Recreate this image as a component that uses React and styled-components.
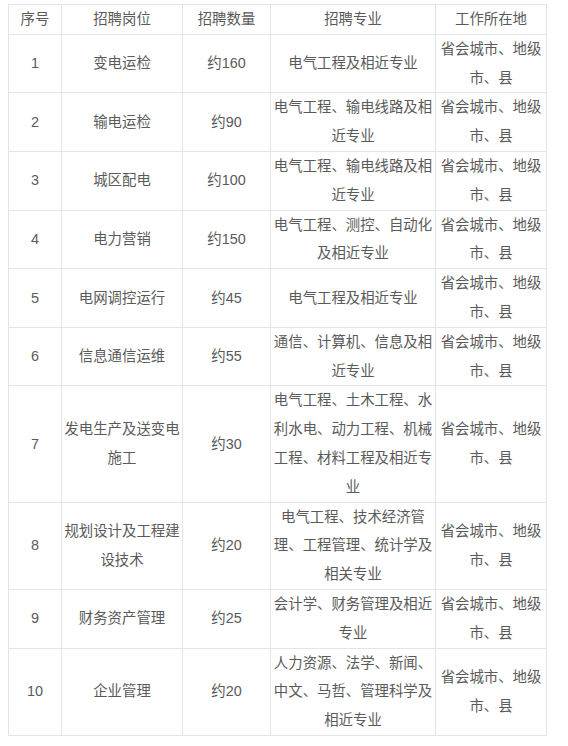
import React from "react";
import styled, { createGlobalStyle } from "styled-components";

const GlobalStyle = createGlobalStyle`
  html, body { margin: 0; padding: 0; background: #fff; }
  body {
    font-family: "Liberation Sans", Arial, "Noto Sans CJK SC", sans-serif;
  }
`;

const Page = styled.div`
  padding: 4px 0 0 8px;
`;

const Table = styled.table`
  border-collapse: collapse;
  table-layout: fixed;
  width: 539px;
  font-size: 14.4px;
  line-height: 28.8px;
  color: #5a5a5a;
`;

const Cell = styled.td`
  border: 1px solid #e4e4e4;
  padding: 0 2px;
  text-align: center;
  vertical-align: middle;
  word-break: break-all;
`;

const HeadCell = styled(Cell).attrs({ as: "th" })`
  font-weight: normal;
`;

const widths = [53, 121, 88, 165, 111];
const headers = ["序号", "招聘岗位", "招聘数量", "招聘专业", "工作所在地"];
const loc = "省会城市、地级市、县";

const rows = [
  ["1", "变电运检", "约160", "电气工程及相近专业"],
  ["2", "输电运检", "约90", "电气工程、输电线路及相近专业"],
  ["3", "城区配电", "约100", "电气工程、输电线路及相近专业"],
  ["4", "电力营销", "约150", "电气工程、测控、自动化及相近专业"],
  ["5", "电网调控运行", "约45", "电气工程及相近专业"],
  ["6", "信息通信运维", "约55", "通信、计算机、信息及相近专业"],
  ["7", "发电生产及送变电施工", "约30", "电气工程、土木工程、水利水电、动力工程、机械工程、材料工程及相近专业"],
  ["8", "规划设计及工程建设技术", "约20", "电气工程、技术经济管理、工程管理、统计学及相关专业"],
  ["9", "财务资产管理", "约25", "会计学、财务管理及相近专业"],
  ["10", "企业管理", "约20", "人力资源、法学、新闻、中文、马哲、管理科学及相近专业"],
];

export default function App() {
  return (
    <>
      <GlobalStyle />
      <Page>
        <Table>
          <colgroup>
            {widths.map((w, i) => (
              <col key={i} style={{ width: w }} />
            ))}
          </colgroup>
          <thead>
            <tr>
              {headers.map((h) => (
                <HeadCell key={h}>{h}</HeadCell>
              ))}
            </tr>
          </thead>
          <tbody>
            {rows.map((r) => (
              <tr key={r[0]}>
                {r.map((c, i) => (
                  <Cell key={i}>{c}</Cell>
                ))}
                <Cell>{loc}</Cell>
              </tr>
            ))}
          </tbody>
        </Table>
      </Page>
    </>
  );
}
